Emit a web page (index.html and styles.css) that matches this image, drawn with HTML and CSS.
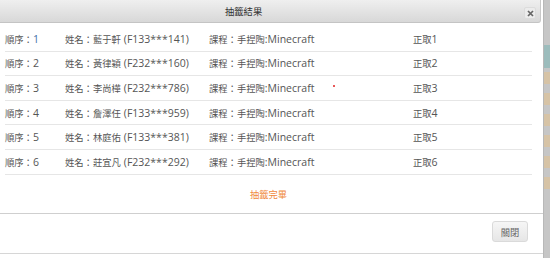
FILE: index.html
```html
<!DOCTYPE html>
<html>
<head>
<meta charset="utf-8">
<link rel="stylesheet" href="styles.css">
</head>
<body>
<div class="page">
  <div class="dialog">
    <div class="titlebar">
      <span class="title">抽籤結果</span>
      <button class="close" aria-label="close">
        <svg width="7" height="7" viewBox="0 0 7 7"><path d="M1 1L6 6M6 1L1 6" stroke="#666" stroke-width="1.7"/></svg>
      </button>
    </div>
    <div class="content">
      <div class="row"><span>順序：<b class="en num">1</b></span><span>姓名：藍于軒<b class="en id">(F133***141)</b></span><span>課程：手捏陶<b class="en">:Minecraft</b></span><span>正取<b class="en">1</b></span></div>
      <div class="row"><span>順序：<b class="en">2</b></span><span>姓名：黃律穎<b class="en id">(F232***160)</b></span><span>課程：手捏陶<b class="en">:Minecraft</b></span><span>正取<b class="en">2</b></span></div>
      <div class="row"><span>順序：<b class="en">3</b></span><span>姓名：李尚樺<b class="en id">(F232***786)</b></span><span class="course">課程：手捏陶<b class="en">:Minecraft</b><i class="dot"></i></span><span>正取<b class="en">3</b></span></div>
      <div class="row"><span>順序：<b class="en">4</b></span><span>姓名：詹澤任<b class="en id">(F133***959)</b></span><span>課程：手捏陶<b class="en">:Minecraft</b></span><span>正取<b class="en">4</b></span></div>
      <div class="row"><span>順序：<b class="en">5</b></span><span>姓名：林庭佑<b class="en id">(F133***381)</b></span><span>課程：手捏陶<b class="en">:Minecraft</b></span><span>正取<b class="en">5</b></span></div>
      <div class="row"><span>順序：<b class="en">6</b></span><span>姓名：莊宜凡<b class="en id">(F232***292)</b></span><span>課程：手捏陶<b class="en">:Minecraft</b></span><span>正取<b class="en">6</b></span></div>
      <div class="done">抽籤完畢</div>
    </div>
    <div class="footer">
      <button class="btn">關閉</button>
    </div>
  </div>
  <div class="strip">
    <div class="teal"></div>
    <div class="tan"></div>
  </div>
</div>
</body>
</html>
```

FILE: styles.css
```css
* { box-sizing: border-box; }
html, body { margin: 0; padding: 0; }
body {
  width: 550px;
  height: 258px;
  overflow: hidden;
  background: #ffffff;
  font-family: "Noto Sans CJK TC", "Open Sans", sans-serif;
  font-size: 9.3px;
  color: #555;
}
.page {
  display: flex;
  height: 258px;
}
.dialog {
  width: 543px;
  height: 254px;
  display: flex;
  flex-direction: column;
  background: #fff;
  border-bottom: 1px solid #d6d6d6;
}
.titlebar {
  position: relative;
  height: 23px;
  flex: none;
  margin-right: 2px;
  background: linear-gradient(#efefef, #d8d8d8);
  border-bottom: 1px solid #c4c4c4;
  border-right: 1px solid #c8c8c8;
  border-bottom-right-radius: 3px;
  display: flex;
  align-items: center;
}
.title {
  padding-left: 225px;
  color: #333;
  font-size: 9.3px;
}
.close {
  position: absolute;
  right: 4px;
  top: 7px;
  width: 12px;
  height: 12px;
  padding: 0;
  border: 1px solid #dcdcdc;
  border-radius: 2px;
  background: #ececec;
  display: flex;
  align-items: center;
  justify-content: center;
}
.content {
  flex: 1;
  padding: 4px 11px 0 5px;
}
.row {
  display: grid;
  grid-template-columns: 60px 144px 204px 1fr;
  height: 24.6px;
  align-items: center;
  border-bottom: 1px solid #e6e6e6;
}
.row span { white-space: nowrap; }
.en {
  font-family: "Open Sans", sans-serif;
  font-weight: normal;
  font-size: 10.5px;
}
.id { margin-left: 3px; }
.num { color: #3f6fa8; }
.course { position: relative; }
.dot {
  position: absolute;
  left: 124px;
  top: 4px;
  width: 2px;
  height: 2px;
  background: #e02020;
  border-radius: 1px;
}
.done {
  text-align: center;
  color: #f08a3c;
  padding-top: 12px;
  line-height: 14px;
}
.footer {
  height: 40px;
  flex: none;
  border-top: 1px solid #cfcfcf;
  display: flex;
  justify-content: flex-end;
  align-items: flex-start;
  padding: 7px 15px 0 0;
}
.btn {
  width: 36px;
  height: 21px;
  padding: 0;
  border: 1px solid #dadada;
  border-radius: 3px;
  background: linear-gradient(#f6f6f6, #e6e6e6);
  color: #666;
  font-family: "Noto Sans CJK TC", sans-serif;
  font-size: 9.3px;
}
.strip {
  width: 7px;
  height: 258px;
  background: #c6c6c6;
  border-left: 1px solid #b8b8b8;
  padding-top: 45px;
}
.teal {
  height: 23px;
  background: #9cbcbc;
}
.tan {
  margin-top: 4px;
  height: 123px;
  background: repeating-linear-gradient(#d6c3a6 0 12px, #c6c6c6 12px 21px);
}
```
